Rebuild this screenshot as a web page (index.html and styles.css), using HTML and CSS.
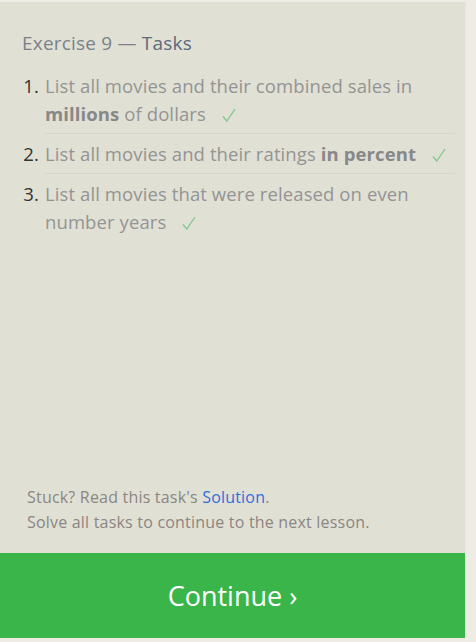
FILE: index.html
```html
<!DOCTYPE html>
<html lang="en">
<head>
<meta charset="utf-8">
<link rel="stylesheet" href="styles.css">
</head>
<body>
<div class="panel">
  <div class="content">
    <h2 class="title">Exercise 9 — <span class="title-strong">Tasks</span></h2>
    <ol class="tasks">
      <li class="task"><span class="num">1.</span><span class="text">List all movies and their combined sales in <b>millions</b> of dollars<svg class="check" viewBox="0 0 14 14" width="14" height="14"><path d="M1 8.5 L4.8 13 L13 1" fill="none" stroke="currentColor" stroke-width="1.3"/></svg></span></li>
      <li class="task"><span class="num">2.</span><span class="text">List all movies and their ratings <b>in percent</b><svg class="check" viewBox="0 0 14 14" width="14" height="14"><path d="M1 8.5 L4.8 13 L13 1" fill="none" stroke="currentColor" stroke-width="1.3"/></svg></span></li>
      <li class="task"><span class="num">3.</span><span class="text">List all movies that were released on even number years<svg class="check" viewBox="0 0 14 14" width="14" height="14"><path d="M1 8.5 L4.8 13 L13 1" fill="none" stroke="currentColor" stroke-width="1.3"/></svg></span></li>
    </ol>
  </div>
  <div class="footer">
    <p class="note">Stuck? Read this task's <a class="link" href="#">Solution</a>.</p>
    <p class="note">Solve all tasks to continue to the next lesson.</p>
  </div>
  <a class="continue" href="#">Continue ›</a>
</div>
</body>
</html>
```
FILE: styles.css
```css
html, body {
  margin: 0;
  padding: 0;
  background: #eeece5;
}
body {
  font-family: "Open Sans", "Noto Sans", sans-serif;
  padding-top: 2px;
}
.panel {
  width: 465px;
  height: 636px;
  background: #e1e0d5;
  display: flex;
  flex-direction: column;
  border-right: 1px solid #e8e7de;
}
.content {
  flex: 1;
  padding: 26px 10px 0 22px;
}
.title {
  margin: 0 0 14px;
  font-size: 19px;
  font-weight: 400;
  letter-spacing: 0.2px;
  line-height: 30px;
  color: #7b818b;
}
.title-strong {
  color: #5c6a7c;
}
.tasks {
  list-style: none;
  margin: 0;
  padding: 0;
}
.task {
  display: flex;
  gap: 6px;
  font-size: 18.5px;
  letter-spacing: 0.1px;
  line-height: 28px;
}
.num {
  width: 17px;
  flex: none;
  text-align: right;
  color: #333;
}
.text {
  flex: 1;
  color: #949494;
  padding: 0 0 5px;
  border-bottom: 1px solid #d7d6cc;
  margin-bottom: 6px;
}
.task:last-child .text {
  border-bottom: 0;
}
.text b {
  color: #888;
}
.check {
  color: #7dc98a;
  margin-left: 16px;
  vertical-align: -1px;
}
.footer {
  padding: 0 22px 18px 27px;
}
.note {
  margin: 0;
  font-size: 16px;
  letter-spacing: 0.2px;
  line-height: 25px;
  color: #8b8681;
}
.link {
  color: #2f6fdb;
  text-decoration: none;
}
.continue {
  display: flex;
  align-items: center;
  justify-content: center;
  height: 85px;
  background: #3ab54a;
  color: #fff;
  font-size: 27px;
  text-decoration: none;
}
```
